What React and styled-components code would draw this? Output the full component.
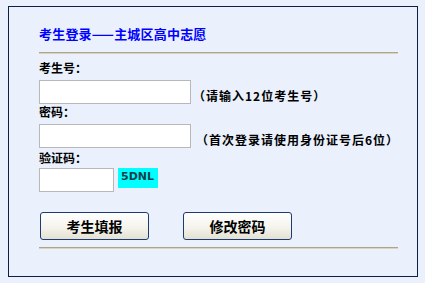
import React from "react";
import styled, { createGlobalStyle } from "styled-components";

const Global = createGlobalStyle`
  html, body { margin: 0; padding: 0; background: #eaf1fd; }
  body { font-family: "Liberation Sans", "Noto Sans CJK SC", sans-serif; }
`;

const Page = styled.div`
  padding: 6px 7px 6px 8px;
`;

const Box = styled.div`
  width: 410px;
  height: 271px;
  box-sizing: border-box;
  border: 1px solid #0c1f45;
  padding: 19px 19px 0 30px;
  display: flex;
  flex-direction: column;
`;

const Title = styled.div`
  font-family: "Noto Sans CJK SC", sans-serif;
  font-weight: 700;
  font-size: 13px;
  line-height: 16px;
  color: #0000ff;
  letter-spacing: 0.2px;
`;

const Rule = styled.div`
  height: 2px;
  margin-top: ${(p) => p.$mt}px;
  background: linear-gradient(#aea68a 0 1px, #d9d4c2 1px 2px);
`;

const Label = styled.div`
  font-family: "Noto Sans CJK SC", sans-serif;
  font-weight: 700;
  font-size: 12px;
  line-height: 16px;
  color: #000;
  margin-top: ${(p) => p.$mt}px;
`;

const Row = styled.div`
  display: flex;
  align-items: ${(p) => (p.$top ? "flex-start" : "flex-end")};
  margin-top: ${(p) => p.$mt}px;
`;

const Input = styled.input`
  width: ${(p) => p.$w}px;
  height: 24px;
  box-sizing: border-box;
  border: 1px solid #b8b8b8;
  background: #fff;
  margin: 0;
  padding: 2px;
  outline: none;
`;

const Hint = styled.span`
  font-family: "Noto Sans CJK SC", sans-serif;
  font-weight: 700;
  font-size: 12px;
  line-height: 16px;
  color: #000;
  letter-spacing: 1px;
  margin-left: ${(p) => p.$ml}px;
  white-space: nowrap;
`;

const Captcha = styled.span`
  margin-left: 4px;
  width: 40px;
  height: 20px;
  box-sizing: border-box;
  background: #00ffff;
  color: #0f3f4c;
  font-family: "DejaVu Sans", sans-serif;
  font-weight: 700;
  font-size: 11px;
  line-height: 16px;
  padding: 1px 0 0 3px;
`;

const Buttons = styled.div`
  display: flex;
  gap: 34px;
  margin-top: 20px;
  padding-left: 1px;
`;

const Button = styled.button`
  width: 109px;
  height: 28px;
  box-sizing: border-box;
  border: 1px solid #1d3c70;
  border-radius: 3px;
  background: linear-gradient(#ffffff, #f3f2ea 60%, #e4e1d2);
  font-family: "Noto Sans CJK SC", sans-serif;
  font-weight: 700;
  font-size: 14px;
  color: #000;
  padding: 0;
  cursor: pointer;
`;

export default function App() {
  return (
    <>
      <Global />
      <Page>
        <Box>
          <Title>考生登录——主城区高中志愿</Title>
          <Rule $mt={10} />
          <Label $mt={6}>考生号：</Label>
          <Row $mt={4}>
            <Input $w={152} />
            <Hint $ml={2}>（请输入12位考生号）</Hint>
          </Row>
          <Label $mt={0}>密码：</Label>
          <Row $mt={4}>
            <Input $w={152} />
            <Hint $ml={5}>（首次登录请使用身份证号后6位）</Hint>
          </Row>
          <Label $mt={2}>验证码：</Label>
          <Row $mt={2} $top>
            <Input $w={75} />
            <Captcha>5DNL</Captcha>
          </Row>
          <Buttons>
            <Button>考生填报</Button>
            <Button>修改密码</Button>
          </Buttons>
          <Rule $mt={7} />
        </Box>
      </Page>
    </>
  );
}
